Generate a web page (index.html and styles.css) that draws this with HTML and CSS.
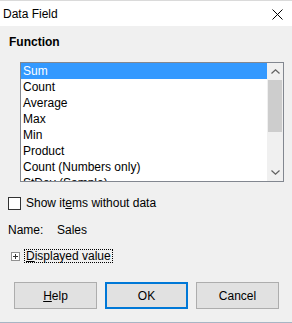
FILE: index.html
```html
<!DOCTYPE html>
<html lang="en">
<head>
  <meta charset="UTF-8">
  <title>Data Field</title>
  <link rel="stylesheet" href="styles.css">
</head>
<body>
  <div class="dialog">
    <div class="titlebar">
      <span class="title">Data Field</span>
      <svg class="close" viewBox="0 0 11 11" width="11" height="11">
        <path d="M0.5 0.5L10.5 10.5M10.5 0.5L0.5 10.5" stroke="#000" stroke-width="1" fill="none"/>
      </svg>
    </div>

    <div class="content">
      <div class="heading">Function</div>

      <div class="listbox">
        <ul class="items">
          <li class="selected">Sum</li>
          <li>Count</li>
          <li>Average</li>
          <li>Max</li>
          <li>Min</li>
          <li>Product</li>
          <li>Count (Numbers only)</li>
          <li>StDev (Sample)</li>
        </ul>
        <div class="scrollbar">
          <div class="arrow">
            <svg viewBox="0 0 9 5" width="9" height="5"><path d="M0.5 4.5L4.5 0.8L8.5 4.5" stroke="#606060" stroke-width="1.2" fill="none"/></svg>
          </div>
          <div class="thumb"></div>
          <div class="track"></div>
          <div class="arrow">
            <svg viewBox="0 0 9 5" width="9" height="5"><path d="M0.5 0.5L4.5 4.2L8.5 0.5" stroke="#606060" stroke-width="1.2" fill="none"/></svg>
          </div>
        </div>
      </div>

      <label class="check-row">
        <span class="checkbox"></span>
        <span>Show it<u>e</u>ms without data</span>
      </label>

      <div class="name-row">
        <span class="name-label">Name:</span>
        <span>Sales</span>
      </div>

      <div class="expander">
        <span class="plus"></span>
        <span class="expander-text"><u>D</u>isplayed value</span>
      </div>

      <div class="buttons">
        <button class="btn"><u>H</u>elp</button>
        <button class="btn default">OK</button>
        <button class="btn">Cancel</button>
      </div>
    </div>
  </div>
</body>
</html>
```

FILE: styles.css
```css
body {
  margin: 0;
  font-family: 'Liberation Sans', Arial, sans-serif;
  font-size: 12px;
  color: #000;
}
.dialog {
  width: 292px;
  height: 323px;
  box-sizing: border-box;
  background: #f0f0f0;
  border-bottom: 1px solid #a7b5c4;
  display: flex;
  flex-direction: column;
}
.titlebar {
  height: 26px;
  box-sizing: border-box;
  background: #fff;
  border-top: 1px solid #dadada;
  display: flex;
  align-items: center;
  justify-content: space-between;
  padding: 0 9px 0 3px;
}
.title {
  line-height: 16px;
}
.close {
  display: block;
  margin-top: 1px;
}
.content {
  padding: 8px 8px 0 8px;
  display: flex;
  flex-direction: column;
}
.heading {
  font-weight: bold;
  line-height: 16px;
  padding-left: 1px;
}
.listbox {
  margin: 12px 0 0 12px;
  width: 264px;
  height: 120px;
  box-sizing: border-box;
  border: 1px solid #828790;
  background: #fff;
  display: flex;
  overflow: hidden;
}
.items {
  list-style: none;
  margin: 0;
  padding: 0;
  flex: 1;
  overflow: hidden;
}
.items li {
  height: 16px;
  line-height: 16px;
  padding-left: 2px;
  white-space: nowrap;
}
.items li.selected {
  background: #3399ff;
  color: #fff;
}
.scrollbar {
  width: 16px;
  background: #f0f0f0;
  display: flex;
  flex-direction: column;
}
.arrow {
  height: 17px;
  display: flex;
  align-items: center;
  justify-content: center;
}
.thumb {
  height: 52px;
  margin: 0 1px;
  background: #cdcdcd;
}
.track {
  flex: 1;
}
.check-row {
  display: flex;
  align-items: center;
  gap: 5px;
  margin-top: 13px;
  line-height: 16px;
}
.checkbox {
  width: 13px;
  height: 13px;
  box-sizing: border-box;
  border: 1px solid #333;
  background: #fff;
}
.name-row {
  display: flex;
  margin-top: 11px;
  line-height: 16px;
}
.name-label {
  width: 49px;
}
.expander {
  display: flex;
  align-items: center;
  margin-top: 11px;
  padding-left: 3px;
}
.plus {
  width: 9px;
  height: 9px;
  box-sizing: border-box;
  border: 1px solid #919191;
  background: #fff linear-gradient(#333, #333) center / 5px 1px no-repeat;
  position: relative;
}
.plus::after {
  content: "";
  position: absolute;
  left: 3px;
  top: 1px;
  width: 1px;
  height: 5px;
  background: #333;
}
.expander-text {
  margin-left: 4px;
  padding: 0 1px;
  line-height: 12px;
  border: 1px dotted #000;
}
.buttons {
  display: flex;
  gap: 8px;
  margin: 19px 0 0 6px;
}
.btn {
  width: 83px;
  height: 27px;
  box-sizing: border-box;
  font: inherit;
  color: #000;
  background: #e1e1e1;
  border: 1px solid #adadad;
  padding: 0;
}
.btn.default {
  border: 2px solid #0078d7;
}
```
